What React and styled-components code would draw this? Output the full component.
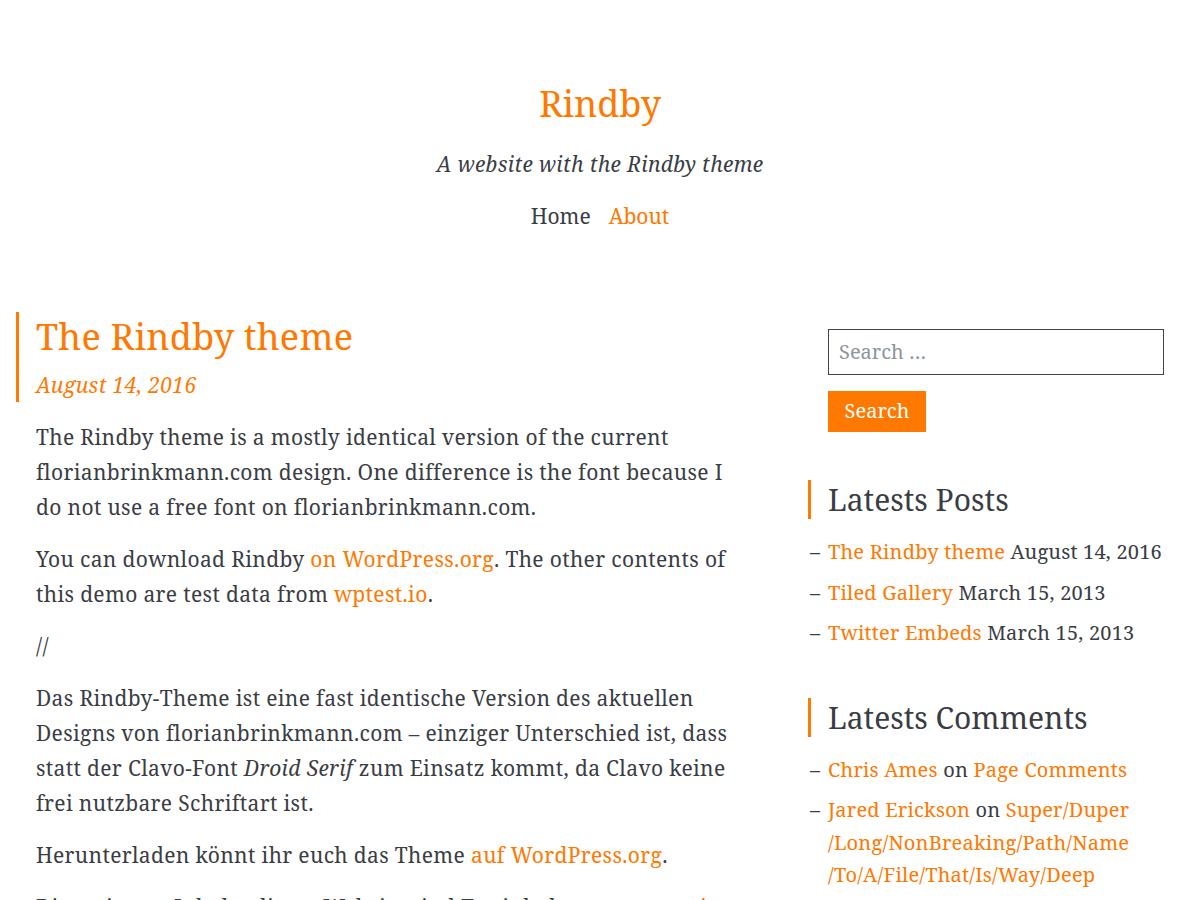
import React from "react";
import styled, { createGlobalStyle } from "styled-components";

const ORANGE = "#ff7800";
const TEXT = "#3a3d44";

const Global = createGlobalStyle`
  html, body { margin: 0; padding: 0; background: #fff; }
  body {
    font-family: "Noto Serif", "Droid Serif", "DejaVu Serif", serif;
    color: ${TEXT};
  }
  a { color: ${ORANGE}; text-decoration: none; }
`;

const Page = styled.div`
  width: 1200px;
  height: 900px;
  overflow: hidden;
`;

const Header = styled.header`
  display: flex;
  flex-direction: column;
  align-items: center;
  padding-top: 80px;
`;

const SiteTitle = styled.a`
  font-size: 36px;
  line-height: 48px;
`;

const Tagline = styled.p`
  margin: 21px 0 0;
  font-style: italic;
  font-size: 21px;
  letter-spacing: 0.3px;
  line-height: 30px;
`;

const Nav = styled.nav`
  display: flex;
  gap: 18px;
  margin-top: 22px;
  font-size: 21px;
  line-height: 30px;
`;

const NavLink = styled.a`
  color: ${(p) => (p.$active ? ORANGE : TEXT)};
`;

const Layout = styled.div`
  display: grid;
  grid-template-columns: 728px 356px;
  column-gap: 64px;
  padding: 81px 0 0 16px;
`;

const Main = styled.main``;

const PostHeader = styled.div`
  border-left: 3px solid ${ORANGE};
  padding-left: 17px;
`;

const PostTitle = styled.h1`
  margin: 0;
  font-weight: normal;
  font-size: 36px;
  line-height: 50px;
  letter-spacing: 0.25px;
  color: ${ORANGE};
`;

const PostDate = styled.div`
  margin-top: 6px;
  font-style: italic;
  font-size: 21px;
  letter-spacing: 0.35px;
  line-height: 34px;
  color: ${ORANGE};
`;

const Content = styled.div`
  padding-left: 20px;
  padding-top: 18px;
  font-size: 21px;
  letter-spacing: 0.35px;
  line-height: 35px;
`;

const Para = styled.p`
  margin: 0 0 17px;
`;

const Sidebar = styled.aside`
  padding-top: 17px;
`;

const SearchInput = styled.input`
  display: block;
  box-sizing: border-box;
  width: 336px;
  height: 46px;
  margin-left: 20px;
  border: 1px solid #444;
  padding: 0 10px 2px;
  font-family: inherit;
  font-size: 20px;
  color: ${TEXT};
  outline: none;
  &::placeholder { color: #8d949c; }
`;

const SearchButton = styled.button`
  display: block;
  margin: 16px 0 0 20px;
  height: 41px;
  width: 98px;
  padding: 0 0 2px;
  border: none;
  background: ${ORANGE};
  color: #fff;
  font-family: inherit;
  font-size: 20px;
`;

const Widget = styled.section`
  margin-top: ${(p) => p.$gap || 48}px;
`;

const WidgetTitle = styled.h2`
  margin: 0;
  border-left: 3px solid ${ORANGE};
  padding-left: 17px;
  font-weight: normal;
  font-size: 30px;
  line-height: 39px;
`;

const List = styled.ul`
  list-style: none;
  margin: 17px 0 0;
  padding: 0;
`;

const Item = styled.li`
  position: relative;
  padding-left: 20px;
  font-size: 20px;
  letter-spacing: 0.2px;
  line-height: 32.5px;
  margin-bottom: 8px;
  &::before {
    content: "–";
    position: absolute;
    left: 2px;
    top: 0;
    color: ${TEXT};
  }
`;

export default function App() {
  return (
    <Page>
      <Global />
      <Header>
        <SiteTitle href="#">Rindby</SiteTitle>
        <Tagline>A website with the Rindby theme</Tagline>
        <Nav>
          <NavLink href="#">Home</NavLink>
          <NavLink href="#" $active>About</NavLink>
        </Nav>
      </Header>
      <Layout>
        <Main>
          <PostHeader>
            <PostTitle>The Rindby theme</PostTitle>
            <PostDate>August 14, 2016</PostDate>
          </PostHeader>
          <Content>
            <Para>
              The Rindby theme is a mostly identical version of the current
              florianbrinkmann.com design. One difference is the font because I
              do not use a free font on florianbrinkmann.com.
            </Para>
            <Para>
              You can download Rindby <a href="#">on WordPress.org</a>. The other
              contents of this demo are test data from <a href="#">wptest.io</a>.
            </Para>
            <Para>//</Para>
            <Para>
              Das Rindby-Theme ist eine fast identische Version des aktuellen
              Designs von florianbrinkmann.com – einziger Unterschied ist, dass
              statt der Clavo-Font <em>Droid Serif</em> zum Einsatz kommt, da
              Clavo keine frei nutzbare Schriftart ist.
            </Para>
            <Para>
              Herunterladen könnt ihr euch das Theme <a href="#">auf WordPress.org</a>.
            </Para>
            <Para>
              Die weiteren Inhalte dieser Website sind Testinhalte von{" "}
              <a href="#">wptest.io</a>.
            </Para>
          </Content>
        </Main>
        <Sidebar>
          <SearchInput placeholder="Search …" />
          <SearchButton>Search</SearchButton>
          <Widget>
            <WidgetTitle>Latests Posts</WidgetTitle>
            <List>
              <Item><a href="#">The Rindby theme</a> August 14, 2016</Item>
              <Item><a href="#">Tiled Gallery</a> March 15, 2013</Item>
              <Item><a href="#">Twitter Embeds</a> March 15, 2013</Item>
            </List>
          </Widget>
          <Widget $gap={48}>
            <WidgetTitle>Latests Comments</WidgetTitle>
            <List>
              <Item><a href="#">Chris Ames</a> on <a href="#">Page Comments</a></Item>
              <Item>
                <a href="#">Jared Erickson</a> on{" "}
                <a href="#">Super/Duper /Long/NonBreaking/Path/Name /To/A/File/That/Is/Way/Deep</a>
              </Item>
            </List>
          </Widget>
        </Sidebar>
      </Layout>
    </Page>
  );
}
